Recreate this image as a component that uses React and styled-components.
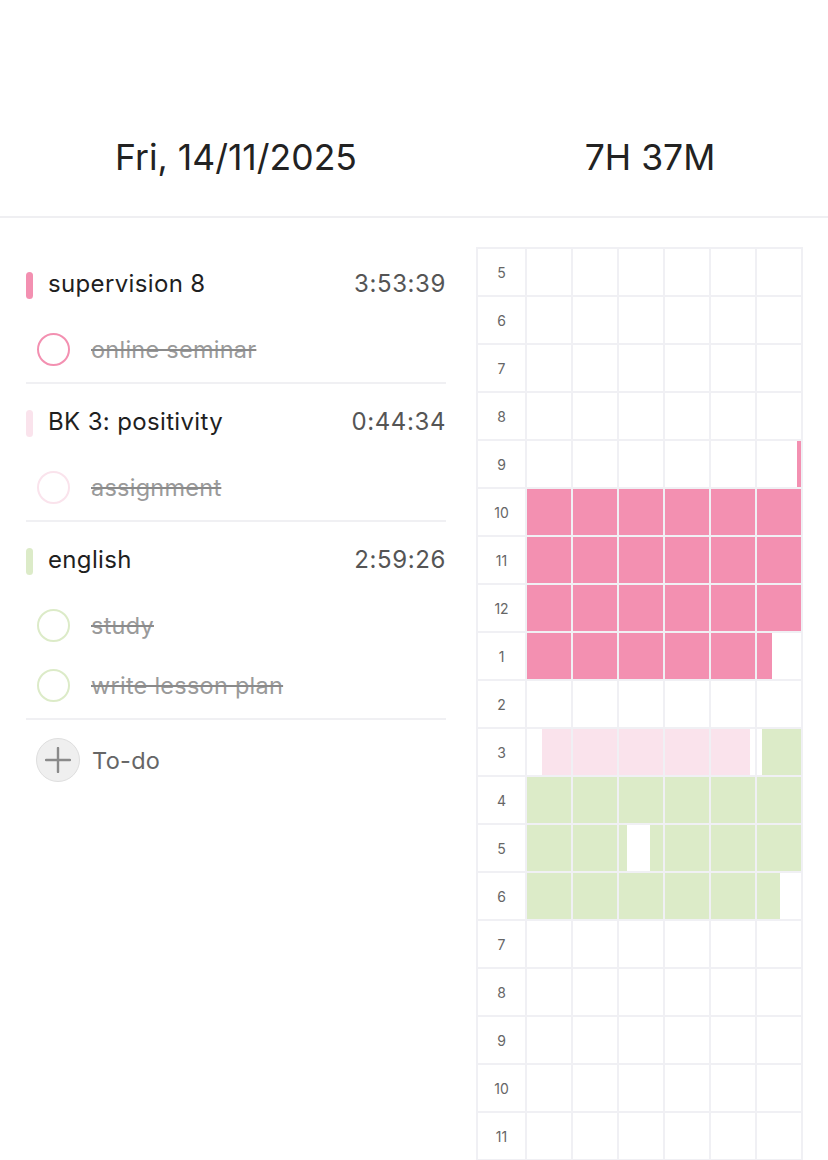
import React from "react";
import styled, { createGlobalStyle } from "styled-components";

const Global = createGlobalStyle`
  html, body { margin: 0; padding: 0; background: #fff; }
  body { font-family: Inter, "Noto Sans", sans-serif; color: #222; }
`;

const Page = styled.div`
  width: 828px;
  height: 1160px;
  overflow: hidden;
  background: #fff;
`;

const Header = styled.header`
  display: grid;
  grid-template-columns: 472px 1fr;
  padding-top: 99px;
  height: 117px;
  border-bottom: 2px solid #efeff2;
`;

const HeaderCell = styled.div`
  display: flex;
  align-items: center;
  justify-content: center;
  font-size: 35.5px;
  font-weight: 400;
  color: #222;
`;

const Body = styled.div`
  display: flex;
  gap: 30px;
  padding: 28px 0 0 26px;
`;

const List = styled.div`
  width: 420px;
  display: flex;
  flex-direction: column;
`;

const Group = styled.section`
  padding: 9px 0 3px;
  border-bottom: 2px solid #f0f0f3;
`;

const GroupHeader = styled.div`
  height: 56px;
  display: flex;
  align-items: center;
  margin-bottom: 8px;
`;

const ColorBar = styled.span`
  width: 7px;
  height: 27px;
  border-radius: 4px;
  background: ${(p) => p.$color};
  margin-top: 5px;
  margin-right: 15px;
`;

const Title = styled.span`
  flex: 1;
  font-size: 24px;
  letter-spacing: 0.35px;
  color: #1f1f1f;
`;

const Duration = styled.span`
  font-size: 24px;
  color: #555;
  letter-spacing: 0.6px;
`;

const Task = styled.div`
  height: 60px;
  display: flex;
  align-items: center;
  padding-left: 11px;
`;

const Check = styled.span`
  width: 29px;
  height: 29px;
  border-radius: 50%;
  border: 2.5px solid ${(p) => p.$color};
  margin-right: 21px;
  flex: none;
`;

const TaskText = styled.span`
  font-size: 23.5px;
  letter-spacing: 0.25px;
  color: #9a9a9a;
  text-decoration: line-through;
  text-decoration-color: #8a8a8a;
`;

const AddRow = styled.div`
  display: flex;
  align-items: center;
  margin-top: 18px;
  padding-left: 10px;
`;

const AddButton = styled.span`
  width: 42px;
  height: 42px;
  border-radius: 50%;
  background: #efefef;
  border: 1.5px solid #dedede;
  display: flex;
  align-items: center;
  justify-content: center;
  margin-right: 12px;
`;

const AddLabel = styled.span`
  font-size: 23.5px;
  letter-spacing: 0.3px;
  color: #666;
`;

const Grid = styled.div`
  display: grid;
  grid-template-columns: 47px repeat(6, 44px);
  grid-auto-rows: 46px;
  gap: 2px;
  padding: 2px;
  background: #f0f0f4;
  width: max-content;
  margin-top: 1px;
`;

const HourLabel = styled.div`
  background: #fff;
  display: flex;
  align-items: center;
  justify-content: center;
  font-size: 14px;
  color: #666;
  padding-top: 1px;
`;

const Cell = styled.div`
  background: #fff;
  position: relative;
  overflow: hidden;
`;

const Fill = styled.div`
  position: absolute;
  top: 0;
  bottom: 0;
  background: ${(p) => p.$color};
`;

const PINK = "#f390b1";
const LIGHT = "#fae3ec";
const GREEN = "#dcebc8";

const groups = [
  { title: "supervision 8", time: "3:53:39", color: PINK, tasks: ["online seminar"] },
  { title: "BK 3: positivity", time: "0:44:34", color: LIGHT, tasks: ["assignment"] },
  { title: "english", time: "2:59:26", color: GREEN, tasks: ["study", "write lesson plan"] },
];

const t = (h, m, s) => h * 3600 + m * 60 + s;
const intervals = [
  { from: t(9, 59, 12), to: t(13, 53, 20), color: PINK },
  { from: t(15, 3, 20), to: t(15, 48, 45), color: LIGHT },
  { from: t(15, 51, 7), to: t(17, 21, 45), color: GREEN },
  { from: t(17, 27, 3), to: t(18, 55, 20), color: GREEN },
];

const hours = Array.from({ length: 19 }, (_, i) => 5 + i);
const label = (h) => (h > 12 ? h - 12 : h);

function cellFills(h, c) {
  const start = h * 3600 + c * 600;
  const end = start + 600;
  const out = [];
  intervals.forEach((iv, i) => {
    const a = Math.max(start, iv.from);
    const b = Math.min(end, iv.to);
    if (b > a) {
      out.push({
        key: i,
        color: iv.color,
        left: ((a - start) / 600) * 100,
        width: ((b - a) / 600) * 100,
      });
    }
  });
  return out;
}

function Plus() {
  return (
    <svg width="26" height="26" viewBox="0 0 26 26">
      <path d="M13 1v24M1 13h24" stroke="#8a8a8a" strokeWidth="2.4" strokeLinecap="round" />
    </svg>
  );
}

export default function App() {
  return (
    <Page>
      <Global />
      <Header>
        <HeaderCell>Fri, 14/11/2025</HeaderCell>
        <HeaderCell>7H 37M</HeaderCell>
      </Header>
      <Body>
        <List>
          {groups.map((g) => (
            <Group key={g.title}>
              <GroupHeader>
                <ColorBar $color={g.color} />
                <Title>{g.title}</Title>
                <Duration>{g.time}</Duration>
              </GroupHeader>
              {g.tasks.map((task) => (
                <Task key={task}>
                  <Check $color={g.color} />
                  <TaskText>{task}</TaskText>
                </Task>
              ))}
            </Group>
          ))}
          <AddRow>
            <AddButton>
              <Plus />
            </AddButton>
            <AddLabel>To-do</AddLabel>
          </AddRow>
        </List>
        <Grid>
          {hours.map((h) => (
            <React.Fragment key={h}>
              <HourLabel>{label(h)}</HourLabel>
              {[0, 1, 2, 3, 4, 5].map((c) => (
                <Cell key={c}>
                  {cellFills(h, c).map((f) => (
                    <Fill
                      key={f.key}
                      $color={f.color}
                      style={{ left: `${f.left}%`, width: `${f.width}%` }}
                    />
                  ))}
                </Cell>
              ))}
            </React.Fragment>
          ))}
        </Grid>
      </Body>
    </Page>
  );
}
